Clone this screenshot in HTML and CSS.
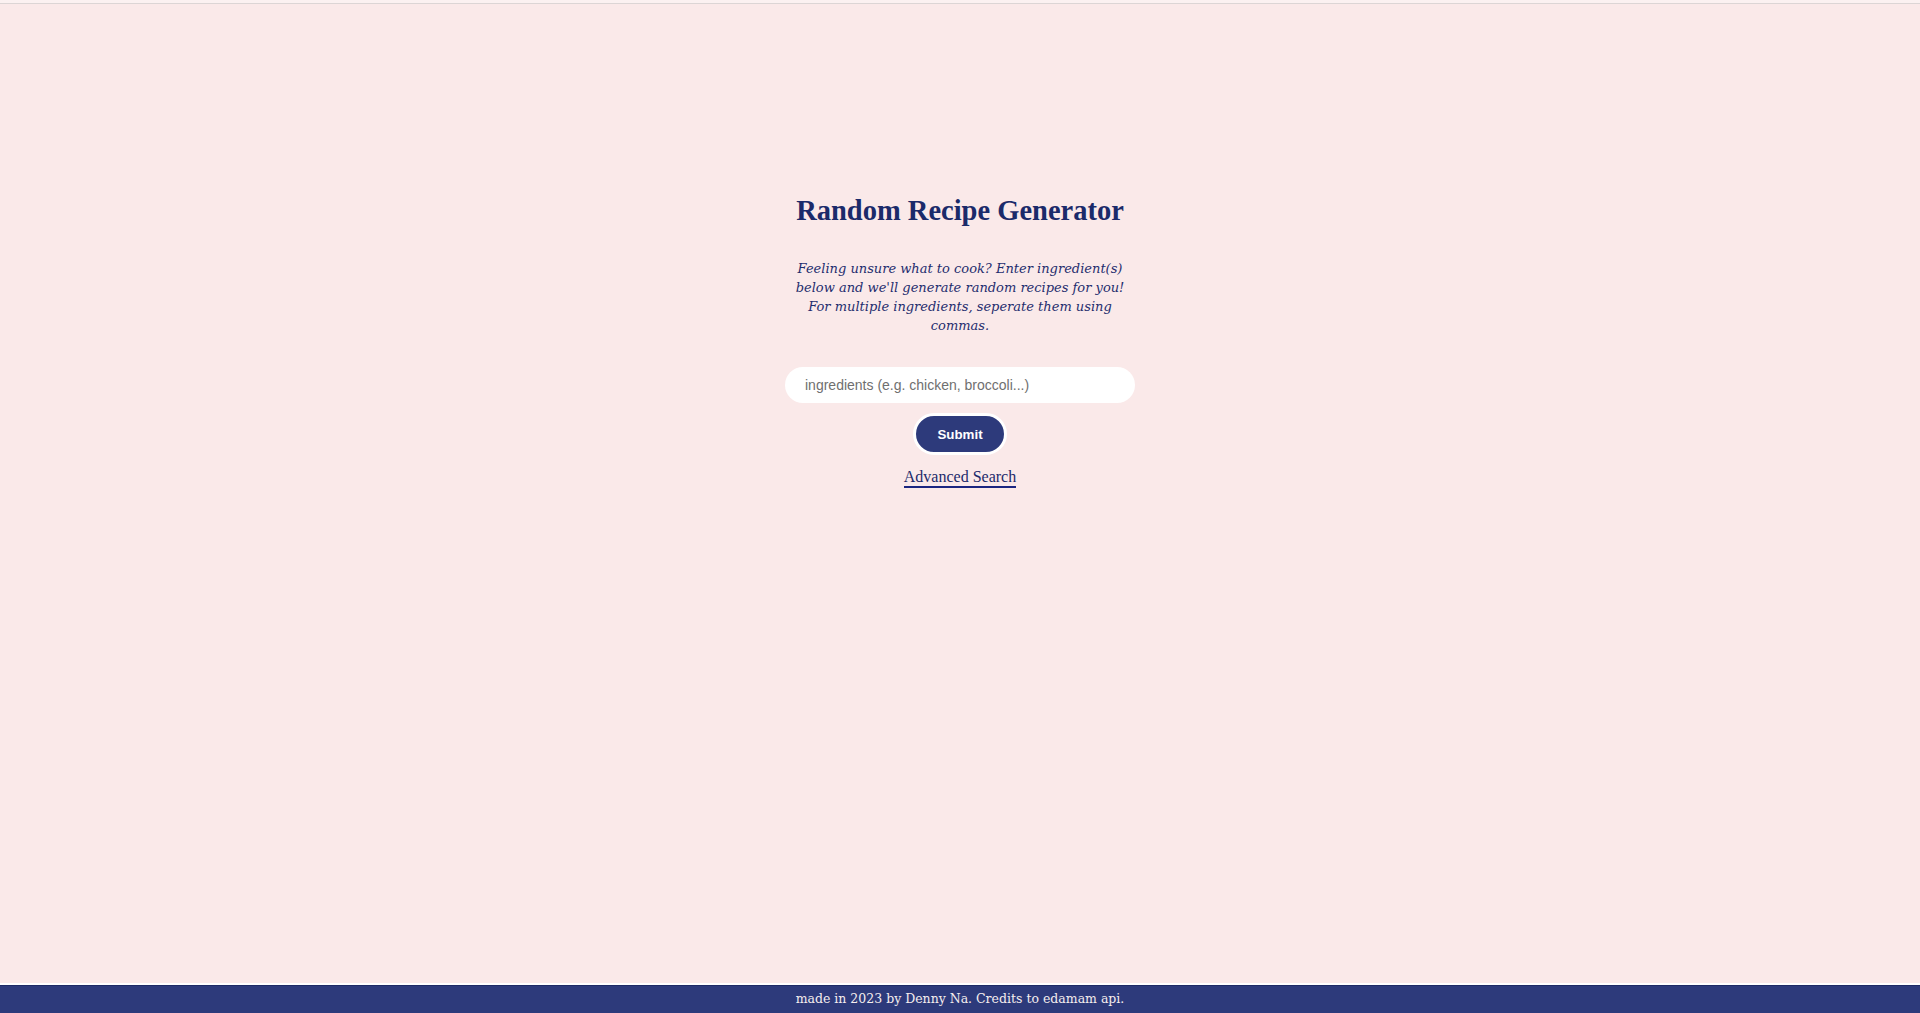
FILE: index.html
```html
<!DOCTYPE html>
<html lang="en">
<head>
<meta charset="utf-8">
<title>Random Recipe Generator</title>
<link rel="stylesheet" href="styles.css">
</head>
<body>
<div class="topline"></div>
<main class="main">
  <h1 class="title">Random Recipe Generator</h1>
  <p class="intro">Feeling unsure what to cook? Enter ingredient(s) below and we'll generate random recipes for you! For multiple ingredients, seperate them using commas.</p>
  <form class="search">
    <input class="search-input" type="text" placeholder="ingredients (e.g. chicken, broccoli...)">
    <button class="submit" type="button">Submit</button>
  </form>
  <a class="advanced" href="#">Advanced Search</a>
</main>
<div class="gap"></div>
<footer class="footer">made in 2023 by Denny Na. Credits to edamam api.</footer>
</body>
</html>
```
FILE: styles.css
```css
html, body {
  margin: 0;
  padding: 0;
  height: 100%;
}
body {
  background: #fae9e9;
  display: flex;
  flex-direction: column;
  font-family: "DejaVu Serif", serif;
  color: #1c2a6b;
}
.topline {
  height: 3px;
  background: #fbf1f1;
  border-bottom: 1px solid #dcd5d5;
}
.main {
  flex: 1;
  display: flex;
  flex-direction: column;
  align-items: center;
  padding-top: 191px;
}
.title {
  margin: 0;
  font-family: "Liberation Serif", serif;
  font-weight: bold;
  font-size: 28.5px;
  line-height: 32px;
  color: #1b2a6a;
}
.intro {
  margin: 32px 0 0;
  width: 340px;
  text-align: center;
  font-style: italic;
  font-size: 13px;
  line-height: 19px;
  color: #1f2d6e;
}
.search {
  display: flex;
  flex-direction: column;
  align-items: center;
  margin-top: 32px;
}
.search-input {
  box-sizing: border-box;
  width: 350px;
  height: 36px;
  border: none;
  border-radius: 18px;
  background: #ffffff;
  padding: 0 20px;
  font-family: "Liberation Sans", Arial, sans-serif;
  font-size: 14px;
  color: #333;
  outline: none;
}
.search-input::placeholder {
  color: #6f6f6f;
}
.submit {
  margin-top: 10px;
  box-sizing: border-box;
  width: 94px;
  height: 42px;
  border: 3px solid #ffffff;
  border-radius: 21px;
  background: #2d3a7b;
  color: #ffffff;
  font-family: "Liberation Sans", Arial, sans-serif;
  font-weight: bold;
  font-size: 13.33px;
  cursor: pointer;
}
.advanced {
  margin-top: 13px;
  font-family: "Liberation Serif", serif;
  font-size: 16px;
  line-height: 18px;
  color: #1c2a6b;
  text-decoration: none;
  border-bottom: 2px solid #1a2580;
}
.gap {
  height: 2px;
  background: #ffffff;
}
.footer {
  height: 28px;
  box-sizing: border-box;
  border-top: 1px solid #1e2a66;
  background: #2d3a7b;
  color: #f6eeee;
  text-align: center;
  font-size: 12.5px;
  line-height: 26px;
}
```
